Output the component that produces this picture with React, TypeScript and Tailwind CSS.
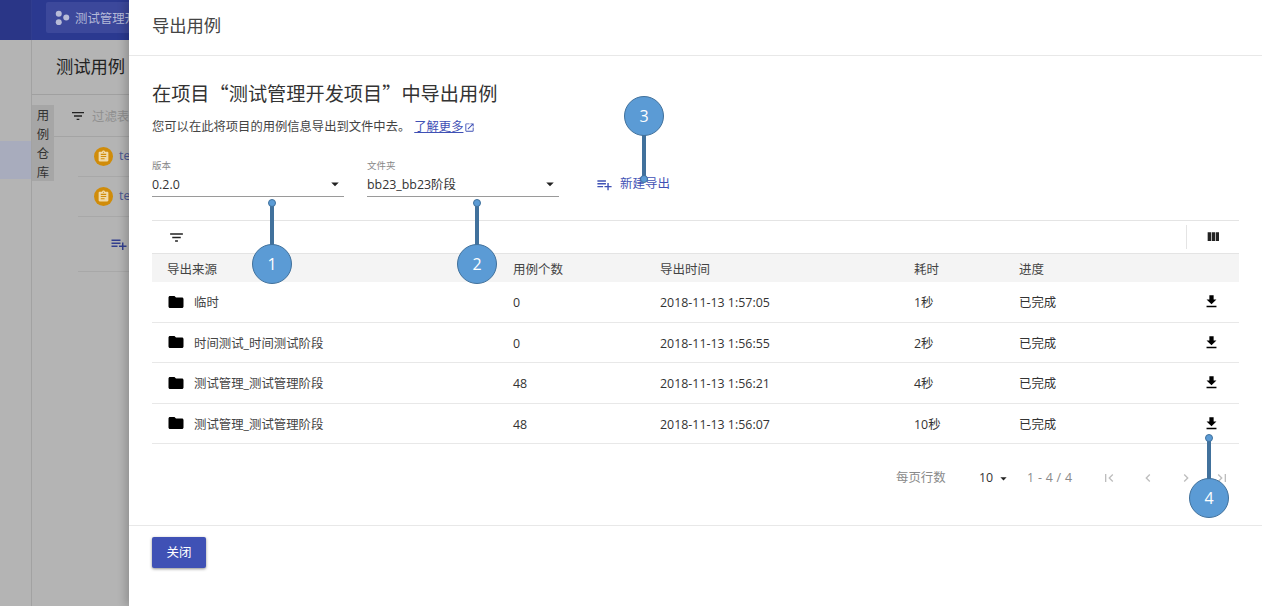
import React from "react";

const I = ({ d, className }: { d: string; className: string }) => (
  <svg viewBox="0 0 24 24" className={className} fill="currentColor"><path d={d} /></svg>
);
const P = {
  filter: "M10 18h4v-2h-4v2zM3 6v2h18V6H3zm3 7h12v-2H6v2z",
  cols: "M10 18h5V5h-5v13zm-6 0h5V5H4v13zM16 5v13h5V5h-5z",
  folder: "M10 4H4c-1.1 0-1.99.9-1.99 2L2 18c0 1.1.9 2 2 2h16c1.1 0 2-.9 2-2V8c0-1.1-.9-2-2-2h-8l-2-2z",
  dl: "M19 9h-4V3H9v6H5l7 7 7-7zM5 18v2h14v-2H5z",
  add: "M14 10H2v2h12v-2zm0-4H2v2h12V6zm4 8v-4h-2v4h-4v2h4v4h2v-4h4v-2h-4zM2 16h8v-2H2v2z",
  first: "M18.41 16.59L13.82 12l4.59-4.59L17 6l-6 6 6 6zM6 6h2v12H6z",
  prev: "M15.41 7.41L14 6l-6 6 6 6 1.41-1.41L10.83 12z",
  next: "M10 6L8.59 7.41 13.17 12l-4.58 4.58L10 18l6-6z",
  last: "M5.59 7.41L10.18 12l-4.59 4.59L7 18l6-6-6-6zM16 6h2v12h-2z",
  open: "M19 19H5V5h7V3H5c-1.11 0-2 .9-2 2v14c0 1.1.89 2 2 2h14c1.1 0 2-.9 2-2v-7h-2v7zM14 3v2h3.59l-9.83 9.83 1.41 1.41L19 6.41V10h2V3h-7z",
  task: "M19 3h-4.18C14.4 1.84 13.3 1 12 1c-1.3 0-2.4.84-2.82 2H5c-1.1 0-2 .9-2 2v14c0 1.1.9 2 2 2h14c1.1 0 2-.9 2-2V5c0-1.1-.9-2-2-2zm-7 0c.55 0 1 .45 1 1s-.45 1-1 1-1-.45-1-1 .45-1 1-1zm2 14H7v-2h7v2zm3-4H7v-2h10v2zm0-4H7V7h10v2z",
  caret: "M7 10l5 5 5-5z",
};

const rows = [
  ["临时", "0", "2018-11-13 1:57:05", "1秒"],
  ["时间测试_时间测试阶段", "0", "2018-11-13 1:56:55", "2秒"],
  ["测试管理_测试管理阶段", "48", "2018-11-13 1:56:21", "4秒"],
  ["测试管理_测试管理阶段", "48", "2018-11-13 1:56:07", "10秒"],
];

const Select = ({ label, value }: { label: string; value: string }) => (
  <div className="w-[192px] shrink-0">
    <div className="text-[9.5px] leading-[12px] text-[#888]">{label}</div>
    <div className="mt-[3px] h-[22px] border-b border-[#9a9a9a] flex items-start justify-between text-[12.4px] leading-[18px] text-[#333]">
      <span className="pt-[1px]">{value}</span>
      <I d={P.caret} className="w-[18px] h-[18px] text-[#222]" />
    </div>
  </div>
);

const Callout = ({ n, pos }: { n: string; pos: string }) => (
  <div className={`absolute z-20 w-[40px] h-[40px] rounded-full bg-[#5b9bd5] border border-[#41719c] text-white text-[16px] flex items-center justify-center ${pos}`}>{n}</div>
);
const Stem = ({ pos }: { pos: string }) => (
  <div className={`absolute z-10 w-[4px] bg-[#41719c] ${pos}`} />
);
const Dot = ({ pos }: { pos: string }) => (
  <div className={`absolute z-20 w-[8px] h-[8px] rounded-full bg-[#5b9bd5] border border-[#41719c] ${pos}`} />
);

export default function App() {
  return (
    <div
      className="relative w-[1262px] h-[606px] flex overflow-hidden bg-white"
      style={{ fontFamily: '"Open Sans", "Noto Sans CJK SC", sans-serif' }}
    >
      {/* dimmed page behind the drawer */}
      <div className="w-[129px] shrink-0 h-full bg-[#b4b4b4] overflow-hidden flex flex-col whitespace-nowrap">
        <div className="h-[40px] shrink-0 bg-[#2b3990] flex">
          <div className="w-[32px] shrink-0 bg-[#2a3687] border-r border-[#303d8f]" />
          <div className="ml-[14px] mt-[2px] h-[31px] flex-1 bg-[#3c489b] rounded-l-[2px] flex items-center pl-[9px] text-[12.4px] text-[#b4b9d8] overflow-hidden">
            <svg viewBox="0 0 16 16" className="w-[15px] h-[15px] shrink-0 mr-[5px]" fill="#b8bcd8">
              <circle cx="4" cy="4" r="3.2" /><circle cx="12" cy="8" r="3.2" /><circle cx="4" cy="13" r="3.2" />
            </svg>
            <span className="pt-[3px]">测试管理开发项目</span>
          </div>
        </div>
        <div className="flex-1 flex min-h-0">
          <div className="w-[32px] shrink-0 border-r border-[#a2a2a2] pt-[101px]">
            <div className="h-[38px] bg-[#a8acbd] w-[31px]" />
          </div>
          <div className="flex-1 flex flex-col min-w-0">
            <div className="h-[55px] shrink-0 border-b border-[#a0a0a0] pl-[24px] flex items-center text-[17.3px] text-[#222]">测试用例</div>
            <div className="flex flex-1 pt-[10px]">
              <div className="w-[22px] h-[76px] shrink-0 bg-[#a6a6a6] text-[12.4px] leading-[19px] text-[#333] text-center pt-[1px]">
                <div>用</div><div>例</div><div>仓</div><div>库</div>
              </div>
              <div className="flex-1 min-w-0">
                <div className="h-[32px] border-b border-[#a4a4a4] flex items-start pt-[3px] pl-[16px] text-[12.4px] text-[#8f8f8f]">
                  <I d={P.filter} className="w-[16px] h-[16px] mr-[6px] text-[#222] shrink-0" />
                  <span>过滤表</span>
                </div>
                <div className="ml-[24px]">
                  {[0, 1].map((k) => (
                    <div key={k} className="h-[40px] border-b border-[#a8a8a8] flex items-center pl-[16px] text-[12.4px] text-[#4a5590]">
                      <span className="w-[19px] h-[19px] rounded-full bg-[#d08c0a] flex items-center justify-center mr-[6px] shrink-0">
                        <I d={P.task} className="w-[13px] h-[13px] text-[#f0d9a8]" />
                      </span>
                      <span>te</span>
                    </div>
                  ))}
                  <div className="h-[55px] border-b border-[#a8a8a8] flex items-center pl-[32px]">
                    <I d={P.add} className="w-[18px] h-[18px] text-[#34408f]" />
                  </div>
                </div>
              </div>
            </div>
          </div>
        </div>
      </div>

      {/* drawer */}
      <div className="relative z-0 flex-1 min-w-0 h-full bg-white flex flex-col shadow-[-4px_0_8px_rgba(0,0,0,0.18)]">
        <div className="h-[56px] shrink-0 border-b border-[#e8e8e8] pl-[23px] pb-[3px] flex items-center text-[17.3px] text-[#444]">导出用例</div>

        <div className="flex-1 min-h-0 pl-[23px] pr-[23px] pt-[24px] text-[#333]">
          <h2
            className="text-[19.2px] leading-[27px] text-[#333] font-normal whitespace-nowrap"
            style={{ fontFamily: '"Noto Sans CJK SC", sans-serif' }}
          >
            在项目“测试管理开发项目”中导出用例
          </h2>
          <p className="mt-[11px] text-[12.3px] leading-[18px] text-[#444] flex items-center whitespace-nowrap">
            <span>您可以在此将项目的用例信息导出到文件中去。</span>
            <span className="ml-[4px] text-[#3f51b5] underline">了解更多</span>
            <I d={P.open} className="w-[11px] h-[11px] ml-[1px] text-[#3f51b5]" />
          </p>
          <div className="mt-[24px] h-[60px] flex items-start">
            <Select label="版本" value="0.2.0" />
            <div className="w-[23px] shrink-0" />
            <Select label="文件夹" value="bb23_bb23阶段" />
            <div className="ml-[37px] mt-[15px] flex items-center text-[12.5px] text-[#3f51b5]">
              <I d={P.add} className="w-[17px] h-[17px] mr-[7px]" />
              <span>新建导出</span>
            </div>
          </div>

          <div className="border-t border-[#e4e4e4]">
            <div className="h-[32px] flex items-center justify-between pl-[16px] pr-[18px]">
              <I d={P.filter} className="w-[17px] h-[17px] text-[#222]" />
              <div className="h-[24px] border-l border-[#e4e4e4] pl-[18px] flex items-center">
                <I d={P.cols} className="w-[16px] h-[16px] text-[#222]" />
              </div>
            </div>
            <div className="h-[29px] bg-[#f4f4f4] border-t border-[#e4e4e4] flex items-center text-[12.5px] text-[#444]">
              <span className="w-[361px] pl-[15px] pt-[4px] shrink-0">导出来源</span>
              <span className="w-[147px] pt-[4px] shrink-0">用例个数</span>
              <span className="w-[254px] pt-[4px] shrink-0">导出时间</span>
              <span className="w-[105px] pt-[4px] shrink-0">耗时</span>
              <span className="pt-[4px]">进度</span>
            </div>
            {rows.map((r, i) => (
              <div key={i} className="h-[40.5px] border-b border-[#e8e8e8] flex items-center text-[12.4px] text-[#333]">
                <span className="w-[361px] shrink-0 pl-[15px] flex items-center">
                  <I d={P.folder} className="w-[18px] h-[18px] text-black mr-[9px] shrink-0" />
                  <span className="text-[#444] pt-[4px]">{r[0]}</span>
                </span>
                <span className="w-[147px] pt-[4px] shrink-0">{r[1]}</span>
                <span className="w-[254px] pt-[4px] shrink-0">{r[2]}</span>
                <span className="w-[105px] pt-[4px] shrink-0">{r[3]}</span>
                <span className="flex-1 pt-[4px]">已完成</span>
                <I d={P.dl} className="w-[17px] h-[17px] text-black mr-[19px] shrink-0" />
              </div>
            ))}
            <div className="h-[68px] flex items-center text-[12.4px] text-[#8a8a8a]">
              <span className="ml-[744px] w-[83px] shrink-0">每页行数</span>
              <span className="text-[#333] w-[17px] shrink-0">10</span>
              <I d={P.caret} className="w-[15px] h-[15px] text-[#222] shrink-0" />
              <span className="ml-[16px] w-[74px] shrink-0 tracking-[0.3px]">1 - 4 / 4</span>
              <I d={P.first} className="w-[16px] h-[16px] mr-[23px] text-[#bdbdbd] shrink-0" />
              <I d={P.prev} className="w-[16px] h-[16px] mr-[22px] text-[#bdbdbd] shrink-0" />
              <I d={P.next} className="w-[16px] h-[16px] mr-[20px] text-[#bdbdbd] shrink-0" />
              <I d={P.last} className="w-[16px] h-[16px] text-[#bdbdbd] shrink-0" />
            </div>
          </div>
        </div>

        <div className="h-[81px] shrink-0 border-t border-[#e8e8e8] pl-[23px] pt-[11px]">
          <button className="w-[54px] h-[31px] rounded-[2px] bg-[#3f51b5] text-white text-[12.5px] pt-[2px] shadow-[0_1px_3px_rgba(0,0,0,0.45)]">关闭</button>
        </div>
      </div>

      {/* numbered annotations laid over the screenshot */}
      <Stem pos="left-[270px] top-[203px] h-[44px]" />
      <Dot pos="left-[268px] top-[199px]" />
      <Callout n="1" pos="left-[252px] top-[244px]" />
      <Stem pos="left-[475px] top-[203px] h-[44px]" />
      <Dot pos="left-[473px] top-[199px]" />
      <Callout n="2" pos="left-[457px] top-[244px]" />
      <Stem pos="left-[642px] top-[130px] h-[48px]" />
      <Dot pos="left-[640px] top-[175px]" />
      <Callout n="3" pos="left-[624px] top-[96px]" />
      <Stem pos="left-[1207px] top-[438px] h-[44px]" />
      <Dot pos="left-[1205px] top-[434px]" />
      <Callout n="4" pos="left-[1189px] top-[478px]" />
    </div>
  );
}
